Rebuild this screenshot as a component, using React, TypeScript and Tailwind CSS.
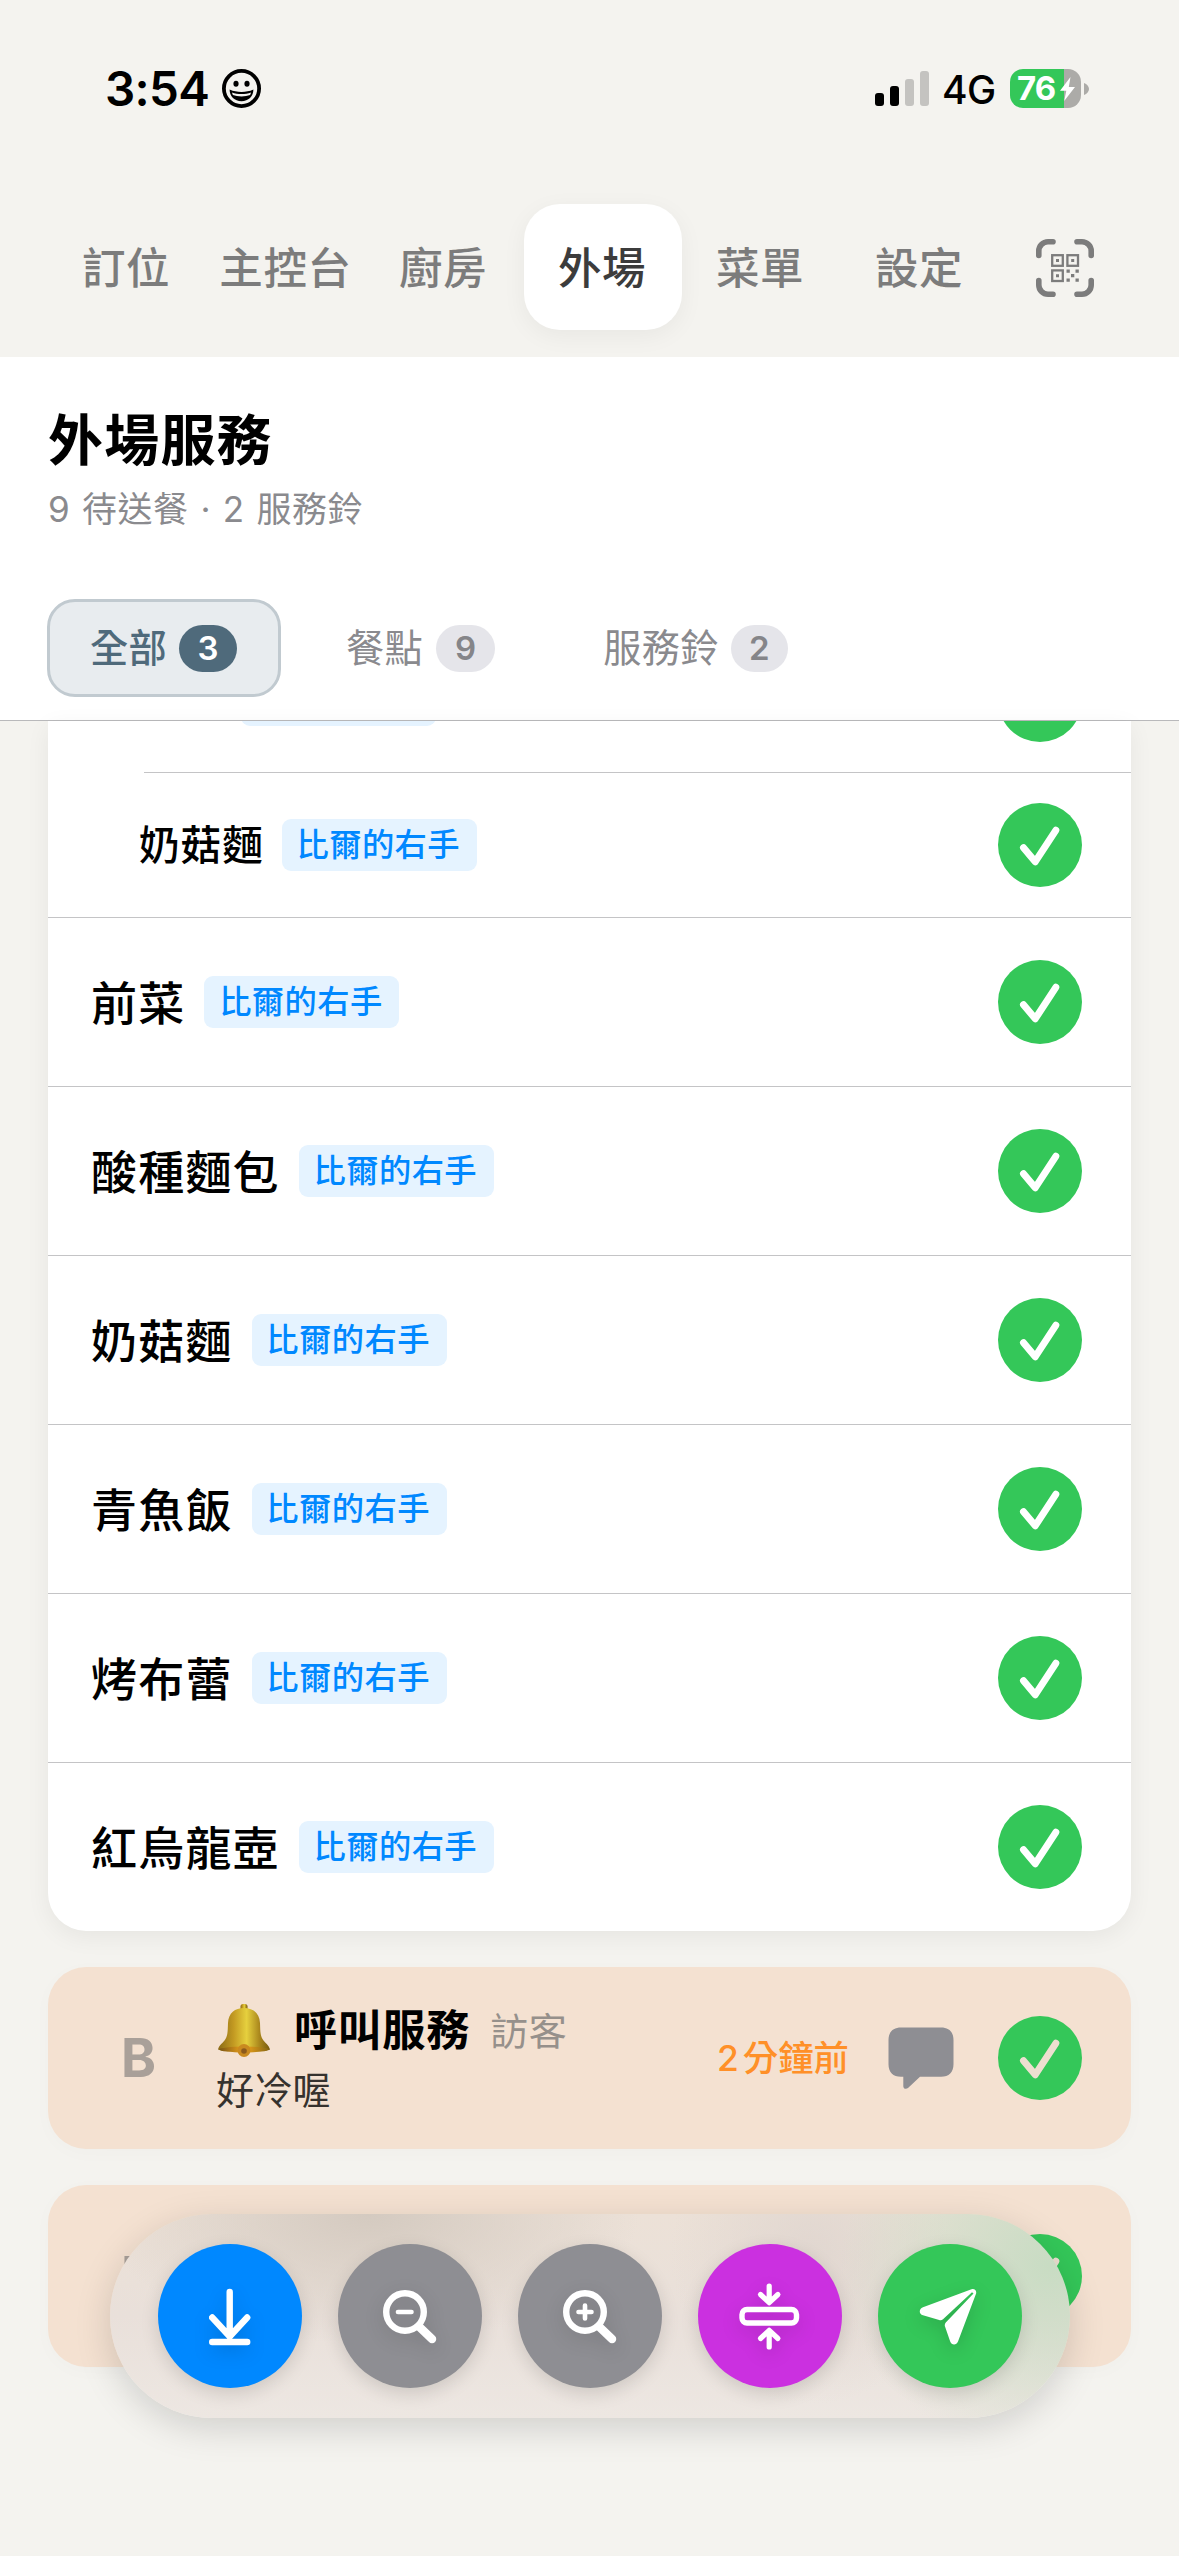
import React from "react";

const CJK = "font-['Inter','Noto_Sans_CJK_TC',sans-serif]";

function StatusBar() {
  return (
    <div className="flex h-[177px] items-start justify-between pl-[105px] pr-[90px] pt-[60px]">
      <div className="flex h-[57px] items-center">
        <span className="w-[117px] whitespace-nowrap text-[47.500px] font-semibold leading-none tracking-[-0.7px] text-black">3:54</span>
        <svg className="h-[39px] w-[39px]" viewBox="0 0 39 39" fill="none">
          <circle cx="19.5" cy="19.5" r="17.6" stroke="#000" strokeWidth="3.8" />
          <ellipse cx="14" cy="14.7" rx="2.6" ry="3" fill="#000" />
          <ellipse cx="25" cy="14.7" rx="2.6" ry="3" fill="#000" />
          <path d="M7.6 20.5c4 1.8 7.500 2.400 11.900 2.400s7.900-.6 11.900-2.400c0 6.800-5 11.700-11.900 11.700S7.600 27.300 7.600 20.500Z" fill="#000" />
          <path d="M9.900 23.400c3 1.100 6.100 1.600 9.600 1.600s6.600-.5 9.600-1.600l-1 2.700c-2.400.9-5.500 1.300-8.600 1.300s-6.200-.4-8.600-1.300Z" fill="#f4f3ef" />
        </svg>
      </div>
      <div className="flex h-[57px] items-center">
        <div className="flex h-[35px] items-end gap-[6px]">
          <i className="h-[13px] w-[9px] rounded-[3px] bg-black" />
          <i className="h-[20px] w-[9px] rounded-[3px] bg-black" />
          <i className="h-[27px] w-[9px] rounded-[3px] bg-[#c4c3c0]" />
          <i className="h-[35px] w-[9px] rounded-[3px] bg-[#c4c3c0]" />
        </div>
        <span className="relative top-px ml-[13px] w-[68px] text-[39px] font-medium leading-none tracking-[-0.5px] text-black">4G</span>
        <div className="flex h-[39px] w-[71px] items-center overflow-hidden rounded-[13px] bg-[linear-gradient(to_right,#34c759_54px,#acaba8_54px)] pl-[7px]">
          <span className="w-[42px] shrink-0 text-[33px] font-bold leading-none tracking-[-1px] text-white">76</span>
          <svg className="h-[26px] w-[17px] shrink-0" viewBox="0 0 17 25">
            <path d="M11.500.5 1 14.200h6.300L5.200 24.500 16 10.500H9.800Z" fill="#fff" />
          </svg>
        </div>
        <svg className="ml-[3px] h-[12px] w-[5px]" viewBox="0 0 5 12"><path d="M0 0c3 1 5 3.500 5 6s-2 5-5 6Z" fill="#acaba8" /></svg>
      </div>
    </div>
  );
}

function QrIcon() {
  return (
    <svg className="h-[58px] w-[58px]" viewBox="0 0 58 58" fill="none">
      <path d="M2.800 16.500V12a9.200 9.200 0 0 1 9.200-9.200h5M41 2.800h5A9.200 9.200 0 0 1 55.200 12v4.500M55.200 41.500V46a9.200 9.200 0 0 1-9.200 9.200h-5M17 55.200h-5A9.200 9.200 0 0 1 2.800 46v-4.500" stroke="#7c7c7c" strokeWidth="5.600" strokeLinecap="round" />
      <g stroke="#7c7c7c" strokeWidth="2.300">
        <rect x="16.200" y="16.200" width="10.600" height="10.600" />
        <rect x="31.400" y="16.200" width="10.600" height="10.600" />
        <rect x="16.200" y="31.400" width="10.600" height="10.600" />
      </g>
      <path d="M20 20h3v3h-3zM35.200 20h3v3h-3zM20 35.200h3v3h-3zM30.500 30.500h3.300v3.300h-3.300zM39.500 30.500h3.300v3.300h-3.300zM35 35h3.300v3.300H35zM30.500 39.500h3.300v3.300h-3.300zM39.500 39.500h3.300v3.300h-3.300z" fill="#7c7c7c" />
    </svg>
  );
}

const tabs = [
  { label: "訂位", box: "w-[126px]" },
  { label: "主控台", box: "w-[193px]" },
  { label: "廚房", box: "w-[122px]" },
];

function NavBar() {
  return (
    <nav className="flex h-[180px] items-center text-[43.500px] font-medium leading-none tracking-[0.6px] text-[#7c7c7c]">
      <div className="flex h-[126px] w-full items-center pl-[63px]">
        {tabs.map((t) => (
          <span key={t.label} className={`${t.box} shrink-0 whitespace-nowrap pt-[3px] text-center`}>{t.label}</span>
        ))}
        <span className="ml-[20px] flex h-[126px] w-[158px] shrink-0 items-center justify-center rounded-[36px] bg-white pr-[2px] pt-[3px] text-[#3c3c3c] shadow-[0_6px_24px_rgba(0,0,0,0.05)]">外場</span>
        <span className="ml-[12px] w-[132px] shrink-0 pt-[3px] text-center">菜單</span>
        <span className="ml-[27px] w-[132px] shrink-0 pt-[3px] text-center">設定</span>
        <span className="ml-[51px] pt-[2px]"><QrIcon /></span>
      </div>
    </nav>
  );
}

function Header() {
  return (
    <header className="h-[364px] border-b border-[#b9b9bb] bg-white px-[48px] pt-[50px]">
      <h1 className="h-[66px] text-[55px] font-bold leading-[66px] tracking-[1.200px] text-black">外場服務</h1>
      <p className="mt-[13px] h-[46px] whitespace-nowrap text-[35px] leading-[46px] tracking-[0.500px] [word-spacing:1.500px] text-[#8a8a8e]">9 待送餐 · 2 服務鈴</p>
      <div className="mt-[67px] flex h-[98px] items-center text-[38.200px] leading-none tracking-[0.400px] text-[#8a8a8e]">
        <div className="-ml-px flex h-[98px] w-[234px] items-center rounded-[28px] border-[3px] border-[#c1cad0] bg-[#e8ecef] pl-[40px] font-medium text-[#4f6a7b]">
          <span className="pt-px">全部</span>
          <b className="ml-[12px] flex h-[47px] w-[58px] items-center justify-center rounded-full bg-[#4f6a7b] text-[33px] font-semibold text-white">3</b>
        </div>
        <span className="ml-[65px] pt-px">餐點</span>
        <b className="ml-[13px] flex h-[47px] w-[59px] items-center justify-center rounded-full bg-[#e5e5ea] text-[33px] font-semibold text-[#858589]">9</b>
        <span className="ml-[108px] pt-px">服務鈴</span>
        <b className="ml-[12px] flex h-[47px] w-[57px] items-center justify-center rounded-full bg-[#e5e5ea] text-[33px] font-semibold text-[#858589]">2</b>
      </div>
    </header>
  );
}

function Check({ tint = "#ffffff" }: { tint?: string }) {
  return (
    <svg className="h-[84px] w-[84px] shrink-0" viewBox="0 0 84 84" fill="none">
      <circle cx="42" cy="42" r="42" fill="#34c759" />
      <path d="M25.500 44.700 37.300 58.700 57.800 27.300" stroke={tint} strokeWidth="7" strokeLinecap="round" strokeLinejoin="round" />
    </svg>
  );
}

function Tag({ name = "比爾的右手" }: { name?: string }) {
  return (
    <span className="flex h-[52px] w-[195px] shrink-0 items-center justify-center rounded-[9px] bg-[#e5f3ff] pr-[2px] text-[32.300px] font-medium leading-none tracking-[0.400px] text-[#0088ff]">{name}</span>
  );
}

const dishes = ["前菜", "酸種麵包", "奶菇麵", "青魚飯", "烤布蕾", "紅烏龍壺"];

function DishCard() {
  return (
    <section className="mx-[48px] h-[1210px] shrink-0 rounded-b-[38px] bg-white shadow-[0_6px_24px_rgba(0,0,0,0.06)]">
      <div className="flex h-[51px] items-end justify-between overflow-hidden pl-[193px] pr-[49px]">
        <div className="mb-[46px]"><Tag name="" /></div>
        <div className="mb-[30px]"><Check /></div>
      </div>
      <div className="ml-[96px] h-px bg-[#c4c4c6]" />
      <div className="flex h-[144px] items-center pl-[91px] pr-[49px]">
        <span className="mr-[18px] pt-[2px] text-[40.700px] font-medium leading-none tracking-[0.900px] text-black">奶菇麵</span>
        <Tag />
        <div className="ml-auto"><Check /></div>
      </div>
      {dishes.map((d) => (
        <div key={d} className="flex h-[169px] items-center border-t border-[#c4c4c6] pl-[43px] pr-[49px]">
          <span className="mr-[19px] pt-[2px] text-[46px] font-medium leading-none tracking-[1.200px] text-black">{d}</span>
          <Tag />
          <div className="ml-auto"><Check /></div>
        </div>
      ))}
    </section>
  );
}

function Bell() {
  return (
    <svg className="h-[54px] w-[54px] shrink-0" viewBox="0 0 54 54">
      <defs>
        <linearGradient id="brass" x1="0" x2="1" y1="0" y2="0">
          <stop offset="0" stopColor="#8a6a16" />
          <stop offset=".3" stopColor="#c39a22" />
          <stop offset=".55" stopColor="#e6d03e" />
          <stop offset=".8" stopColor="#a9861c" />
          <stop offset="1" stopColor="#75590f" />
        </linearGradient>
        <linearGradient id="rim" x1="0" x2="1" y1="0" y2="0">
          <stop offset="0" stopColor="#7a5614" />
          <stop offset=".5" stopColor="#f2a51c" />
          <stop offset="1" stopColor="#8a6a14" />
        </linearGradient>
      </defs>
      <rect x="23.500" y="0" width="7" height="7" rx="2.500" fill="url(#brass)" />
      <path d="M27 4c-9 0-15.500 5-16 15-.3 8-.2 12-2.500 16-2.500 4-6.500 6-7.500 10.500 5 3 47 3 52 0-1-4.500-5-6.500-7.500-10.500-2.300-4-2.200-8-2.500-16C42.500 9 36 4 27 4Z" fill="url(#brass)" />
      <ellipse cx="27" cy="45.500" rx="24.500" ry="3" fill="url(#rim)" />
      <circle cx="27" cy="46.500" r="6.500" fill="#c98a20" />
      <circle cx="27" cy="47" r="2.800" fill="#8c5a1c" />
    </svg>
  );
}

function ServiceCard({ message }: { message: string }) {
  return (
    <section className="mx-[48px] mt-[36px] flex h-[182px] shrink-0 items-center rounded-[38px] bg-[#f4e1d1] pr-[49px] shadow-[0_4px_20px_rgba(0,0,0,0.02)]">
      <span className="w-[169px] pl-[73px] text-[53px] font-bold leading-none text-[#a9a099]">B</span>
      <div className="flex flex-col pt-[3px]">
        <div className="flex h-[60px] items-center">
          <Bell />
          <span className="ml-[23px] text-[43.200px] font-bold leading-none tracking-[0.900px] text-black">呼叫服務</span>
          <span className="ml-[20px] text-[38px] leading-none tracking-[0.500px] text-[#96908b]">訪客</span>
        </div>
        <span className="-ml-px h-[58px] text-[38px] leading-[59px] tracking-[0.300px] text-[#36322e]">{message}</span>
      </div>
      <span className="ml-auto mr-[39px] whitespace-nowrap pt-px text-[35.400px] font-medium leading-none text-[#ff9028]"><span className="mr-[4px]">2</span>分鐘前</span>
      <svg className="mr-[44px] h-[62px] w-[66px] shrink-0" viewBox="0 0 66 62">
        <path d="M13 .5h40c8 0 12.500 4.500 12.500 12.500v24.300c0 8-4.500 12.500-12.500 12.500H32L20 61c-2 1.500-4.700.7-4.700-1.800v-9.400H13C5 49.800.5 45.300.5 37.300V13C.5 5 5 .5 13 .5Z" fill="#8e8e93" />
      </svg>
      <Check tint="#eddfd0" />
    </section>
  );
}

function ActionButton({ color, children }: { color: string; children: React.ReactNode }) {
  return (
    <button className={`flex h-[144px] w-[144px] items-center justify-center rounded-full shadow-[0_6px_18px_rgba(0,0,0,0.13)] ${color}`}>
      <svg className="h-[144px] w-[144px] drop-shadow-[0_6px_9px_rgba(0,0,0,0.14)]" viewBox="0 0 144 144" fill="none" stroke="#fff" strokeLinecap="round" strokeLinejoin="round">{children}</svg>
    </button>
  );
}

function Toolbar() {
  return (
    <div className="absolute left-[110px] top-[2214px] flex h-[204px] w-[960px] items-center justify-center gap-[36px] rounded-[102px] bg-[radial-gradient(ellipse_270px_130px_at_27%_0%,#d4cac0_0%,rgba(212,202,192,0)_100%),radial-gradient(ellipse_210px_190px_at_98%_25%,#c8dcc3_0%,rgba(208,220,200,0)_100%),radial-gradient(ellipse_140px_150px_at_73%_20%,rgba(222,212,206,0.8)_0%,rgba(222,212,206,0)_100%),linear-gradient(to_bottom,#ece1d7,#e9e0da_50%,#ede7e2)] shadow-[0_10px_36px_rgba(0,0,0,0.15)]">
      <ActionButton color="bg-[#0088ff]">
        <path d="M71.700 48v43M54.200 73.500l17.500 19 17.500-19M54.200 98h35" strokeWidth="6.400" />
      </ActionButton>
      <ActionButton color="bg-[#8e8e93]">
        <circle cx="67" cy="68" r="18.800" strokeWidth="6.400" />
        <path d="M60 68h13.500" strokeWidth="4.600" />
        <path d="M82 83.500 94 95" strokeWidth="8.500" />
      </ActionButton>
      <ActionButton color="bg-[#8e8e93]">
        <circle cx="67" cy="68" r="18.800" strokeWidth="6.400" />
        <path d="M60.500 68h13M67 61.500v13" strokeWidth="4.600" />
        <path d="M82 83.500 94 95" strokeWidth="8.500" />
      </ActionButton>
      <ActionButton color="bg-[#cb30e0]">
        <rect x="44" y="65.500" width="54.500" height="13.500" rx="5" strokeWidth="5.400" />
        <path d="M71.200 42v16M62.500 50.500l8.700 8.200 8.700-8.200M71.200 103V88M62.500 94.500l8.700-8.200 8.700 8.200" strokeWidth="5.200" />
      </ActionButton>
      <ActionButton color="bg-[#34c759]">
        <path d="M93.500 45.300c3-1 5.500 1.400 4.500 4.500L80 97.500c-1.500 4-6.500 3.900-7.800 0L67 82.500c-.5-1.500-.2-2.800.8-3.900L95.500 49.500 94 48.200 65 75.200c-1 1-2.300 1.300-3.800.9L45 71.300c-4.300-1.300-4.300-6.300 0-8Z" fill="#fff" stroke="none" />
      </ActionButton>
    </div>
  );
}

export default function App() {
  return (
    <div className={`relative flex h-[2556px] w-[1179px] flex-col overflow-hidden bg-[#f4f3ef] ${CJK}`} lang="zh-Hant">
      <StatusBar />
      <NavBar />
      <Header />
      <DishCard />
      <ServiceCard message="好冷喔" />
      <ServiceCard message="好冷喔" />
      <Toolbar />
    </div>
  );
}
